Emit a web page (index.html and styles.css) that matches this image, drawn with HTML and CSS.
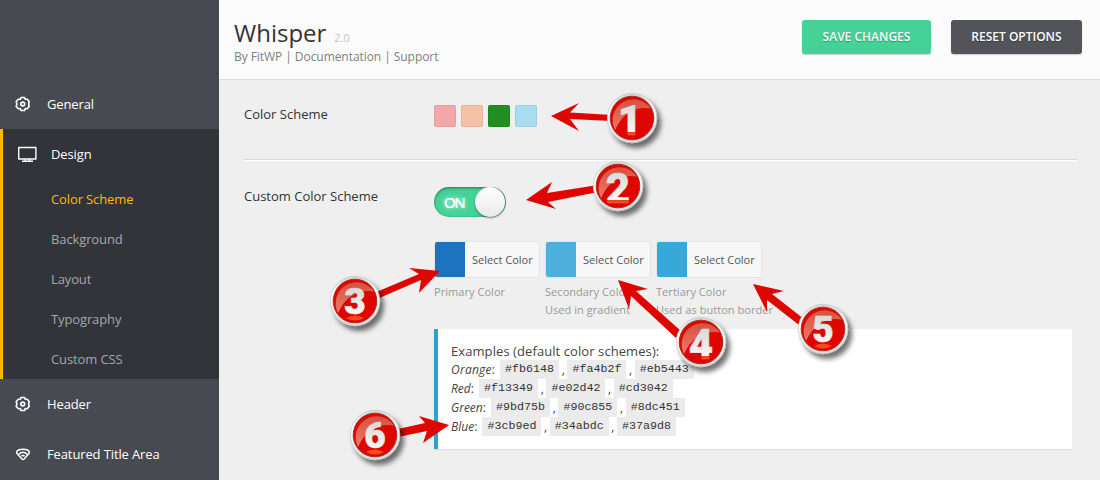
FILE: index.html
```html
<!DOCTYPE html>
<html lang="en">
<head>
<meta charset="utf-8">
<title>Whisper Options</title>
<link rel="stylesheet" href="styles.css">
</head>
<body>
<div class="app">
  <nav class="sidebar">
    <a class="item"><svg class="icon" viewBox="0 0 16 16"><path d="M5.300 3.300L6 1.500H9.500L10.200 3.300 12.200 3.200 14.200 5.500 13.600 8 14.200 10.500 12.200 12.700 10.200 12.500 9.500 14.500H6L5.300 12.500 3.300 12.700 1.200 10.500 1.900 8 1.200 5.500 3.300 3.200z"/><circle cx="7.750" cy="8" r="1.900"/></svg>General</a>
    <div class="group">
      <a class="item active"><svg class="icon monitor" viewBox="0 0 20 16"><path d="M.7 1.500h17.200v11.500H.7zM7.300 13v2.300M11.300 13v2.300M4 15.300h11"/></svg>Design</a>
      <a class="sub current">Color Scheme</a>
      <a class="sub">Background</a>
      <a class="sub">Layout</a>
      <a class="sub">Typography</a>
      <a class="sub">Custom CSS</a>
    </div>
    <a class="item"><svg class="icon" viewBox="0 0 16 16"><path d="M5.300 3.300L6 1.500H9.500L10.200 3.300 12.200 3.200 14.200 5.500 13.600 8 14.200 10.500 12.200 12.700 10.200 12.500 9.500 14.500H6L5.300 12.500 3.300 12.700 1.200 10.500 1.900 8 1.200 5.500 3.300 3.200z"/><circle cx="7.750" cy="8" r="1.900"/></svg>Header</a>
    <a class="item"><svg class="icon fan" viewBox="0 0 16 16"><path d="M1.800 7.200C1 4 5 3.200 8 3.200S15 4 14.200 7.200L9.300 12.800Q8 14.200 6.700 12.800zM3.800 8.200Q8 4.300 12.200 8.200M6.300 10.200Q8 8.700 9.700 10.200"/></svg>Featured Title Area</a>
  </nav>
  <main class="main">
    <header class="top">
      <div class="brand">
        <h1 class="title">Whisper<span class="version">2.0</span></h1>
        <p class="links">By FitWP | Documentation | Support</p>
      </div>
      <button class="btn save">SAVE CHANGES</button>
      <button class="btn reset">RESET OPTIONS</button>
    </header>
    <section class="row schemes">
      <div class="label">Color Scheme</div>
      <div class="swatches"><i class="swatch pink"></i><i class="swatch peach"></i><i class="swatch green"></i><i class="swatch sky"></i></div>
    </section>
    <section class="row custom">
      <div class="label">Custom Color Scheme</div>
      <div class="content">
        <div class="toggle"><span class="on">ON</span><i class="knob"></i></div>
        <div class="pickers">
          <div class="picker"><div class="pick"><i class="chip primary"></i><span>Select Color</span></div><p class="desc">Primary Color</p></div>
          <div class="picker"><div class="pick"><i class="chip secondary"></i><span>Select Color</span></div><p class="desc">Secondary Color<br>Used in gradient</p></div>
          <div class="picker"><div class="pick"><i class="chip tertiary"></i><span>Select Color</span></div><p class="desc">Tertiary Color<br>Used as button border</p></div>
        </div>
        <div class="examples">
          <div class="heading">Examples (default color schemes):</div>
          <div class="line"><em class="wide">Orange</em>: <code>#fb6148</code> , <code>#fa4b2f</code> , <code>#eb5443</code></div>
          <div class="line"><em>Red</em>: <code>#f13349</code> , <code>#e02d42</code> , <code>#cd3042</code></div>
          <div class="line"><em>Green</em>: <code>#9bd75b</code> , <code>#90c855</code> , <code>#8dc451</code></div>
          <div class="line"><em>Blue</em>: <code>#3cb9ed</code> , <code>#34abdc</code> , <code>#37a9d8</code></div>
        </div>
      </div>
    </section>
  </main>
  <svg class="callouts" viewBox="0 0 1100 480">
    <defs>
      <linearGradient id="rim" x1="0" y1="0" x2="0" y2="1"><stop offset="0" stop-color="#d2d2d2"/><stop offset=".35" stop-color="#fff"/><stop offset="1" stop-color="#d8d8d8"/></linearGradient>
      <linearGradient id="gloss" x1="0" y1="0" x2="0" y2="1"><stop offset="0" stop-color="#d25440"/><stop offset="1" stop-color="#ee7865"/></linearGradient>
      <linearGradient id="digit" gradientUnits="userSpaceOnUse" x1="0" y1="-14" x2="0" y2="15"><stop offset="0" stop-color="#d8d8d8"/><stop offset="1" stop-color="#fafafa"/></linearGradient>
      <linearGradient id="digit-lit" gradientUnits="userSpaceOnUse" x1="0" y1="-14" x2="0" y2="20"><stop offset="0" stop-color="#d8d8d8"/><stop offset=".81" stop-color="#f6f6f6"/><stop offset=".82" stop-color="#e83c13"/><stop offset="1" stop-color="#ff7043"/></linearGradient>
      <filter id="shadow" x="-30%" y="-30%" width="180%" height="180%"><feDropShadow dx="4" dy="5" stdDeviation="2.500" flood-color="#000" flood-opacity=".55"/></filter>
      <g id="disc">
        <circle r="24.700" fill="url(#rim)" stroke="#c9c9c9" stroke-width=".7" filter="url(#shadow)"/>
        <circle r="21.800" fill="#df0500" stroke="#a82f29" stroke-width="1"/>
        <path d="M-17 12A21 21 0 0 1 19-9.500C5-12-9-6-17 12z" fill="url(#gloss)"/>
      </g>
      <path id="glow" d="M-9 17Q0 12 9 17Q0 22-9 17z" fill="#fa4a19"/>
    </defs>
    <g class="arrows">
      <path d="M551 116L579 103 570 112.500 612 115V121L570 119 579 131z"/>
      <path d="M526 200L552 182 547 193 598 185V192L548 202 556 209z"/>
      <path d="M440 271L409 268 419 274 374 293 377 299 421 280 419 293z"/>
      <path d="M618 280L648 289 636 291 681 331 676 338 631 296 629 309z"/>
      <path d="M753 284L784 291 772 294 804 319 799 325 767 300 767 312z"/>
      <path d="M449 425L419 416 425 423 398 429V437L427 431 423 443z"/>
    </g>
    <g class="badges">
      <g transform="translate(632 118)"><use href="#disc"/><text class="lit" x="-2" y="17">1</text></g>
      <g transform="translate(618 186)"><use href="#disc"/><text class="lit" y="17">2</text></g>
      <g transform="translate(355 301)"><use href="#disc"/><use href="#glow"/><text y="13">3</text></g>
      <g transform="translate(701 342)"><use href="#disc"/><text class="lit" y="17">4</text></g>
      <g transform="translate(823 329)"><use href="#disc"/><use href="#glow"/><text y="13">5</text></g>
      <g transform="translate(375 435)"><use href="#disc"/><use href="#glow"/><text y="13">6</text></g>
    </g>
  </svg>
</div>
</body>
</html>
```
FILE: styles.css
```css
* { box-sizing: border-box; }
body { margin: 0; font-family: "Open Sans", sans-serif; font-size: 13px; color: #444; }
p, h1 { margin: 0; font-weight: 400; }
.app { position: relative; display: flex; width: 1100px; height: 480px; overflow: hidden; background: #efefef; }

.sidebar { width: 219px; flex: none; padding-top: 79px; background: #494b52 radial-gradient(circle at 1px 1px, #45474e 0.7px, transparent 1px) 0 0 / 4px 4px; color: #fff; letter-spacing: -.12px; }
.item { display: flex; align-items: center; height: 50px; padding-left: 15px; }
.icon { width: 16px; height: 16px; margin-right: 16px; fill: none; stroke: #fff; stroke-width: 1.6; stroke-linejoin: round; }
.fan { stroke-width: 1.4; }
.group { height: 250px; background: #32343a; border-left: 3px solid #ffba00; }
.monitor { width: 20px; margin-right: 13px; stroke-width: 1.4; }
.sub { display: flex; align-items: center; height: 40px; padding-left: 48px; color: #a5a7aa; }
.current { color: #ffba00; }

.main { flex: 1; }
.top { display: flex; height: 80px; padding: 20px 18px 0 15px; background: #fbfbfb; border-bottom: 1px solid #dedede; }
.brand { flex: 1; }
.title { height: 27px; font-size: 24px; line-height: 25px; color: #333; }
.version { margin-left: 8px; font-size: 11px; color: #c4c4c4; }
.links { font-size: 12px; line-height: 20px; letter-spacing: -.06px; color: #808080; }
.btn { height: 34px; padding: 0 0 2px; border: 0; border-radius: 3px; font: 600 12px "Open Sans", sans-serif; color: #fff; box-shadow: 0 1px 1px #ccc; text-shadow: 0 1px 1px rgba(0,0,0,.3); }
.save { width: 129px; margin-right: 20px; background: #44d297; }
.reset { width: 131px; background: #535459; }

.row { display: flex; margin: 0 23px 0 25px; }
.label { width: 190px; flex: none; line-height: 18px; color: #333; }
.schemes { height: 80px; padding-top: 25px; border-bottom: 1px solid #d9d9d9; box-shadow: 0 1px #fff; }
.swatches { display: flex; gap: 5px; }
.swatch { width: 22px; height: 22px; border: 1px solid rgba(0,0,0,.06); border-radius: 2px; }
.pink { background: #f4a7a8; }
.peach { background: #f5c1a7; }
.green { background: #228d22; }
.sky { background: #a8dcf0; }
.custom { padding-top: 27px; }
.content { width: 638px; }
.toggle { display: flex; justify-content: space-between; align-items: center; width: 72px; height: 30px; padding: 0 1px 0 10px; border-radius: 15px; background: #44d297; box-shadow: inset 0 1px 3px rgba(0,0,0,.45); color: #fff; }
.on { font: 15px "Liberation Sans", sans-serif; letter-spacing: -1.2px; text-shadow: 0 0 5px #fff, 0 0 .5px #fff; }
.knob { width: 30px; height: 30px; border-radius: 50%; background: linear-gradient(#fff, #e9e9e9); box-shadow: 0 1px 2px rgba(0,0,0,.5); }
.pickers { display: flex; height: 88px; margin-top: 24px; }
.picker { width: 111px; flex: none; white-space: nowrap; }
.pick { display: flex; align-items: center; width: 106px; height: 37px; border: 1px solid #e5e5e5; border-radius: 3px; background: #f7f7f7; font-size: 11px; overflow: hidden; color: #555; }
.chip { width: 30px; height: 35px; margin-right: 7px; }
.primary { background: #1e73be; }
.secondary { background: #4dafda; }
.tertiary { background: #37a9d8; }
.desc { margin-top: 5px; font-size: 11px; line-height: 18px; letter-spacing: .05px; color: #999; }
.examples { height: 120px; padding: 13px 13px 0; border-left: 4px solid #2ea2cc; background: #fff; box-shadow: 0 1px 1px #ddd; font-size: 12px; }
.heading { line-height: 18px; font-size: 13px; font-weight: 500; letter-spacing: .08px; }
.line { height: 19px; line-height: 19px; white-space: nowrap; word-spacing: -.5px; }
.wide { letter-spacing: .25px; }
code { display: inline-block; width: 59px; height: 19px; padding: 0 5px; background: #ebebeb; font: 11.67px/19px "Liberation Mono", monospace; color: #333; vertical-align: top; }
code:first-of-type { margin-left: 2.5px; }

.callouts { position: absolute; left: 0; top: 0; width: 1100px; height: 480px; }
.arrows { fill: #df0500; }
.badges text { font: 900 37px Roboto, "Liberation Sans", sans-serif; text-anchor: middle; fill: url(#digit); stroke: url(#digit); stroke-width: .6; }
.badges .lit { font-size: 42px; fill: url(#digit-lit); stroke: url(#digit-lit); }
```
